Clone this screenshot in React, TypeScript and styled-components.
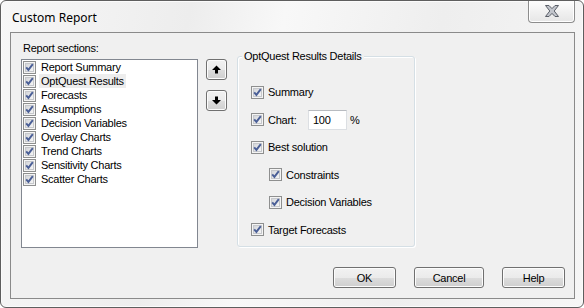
import React from 'react';
import styled, { createGlobalStyle } from 'styled-components';

const GlobalStyle = createGlobalStyle`
  html, body { margin: 0; padding: 0; background: #ffffff; }
  body { width: 584px; height: 308px; overflow: hidden; }
  *, *::before, *::after { box-sizing: border-box; }
`;

const Window = styled.div`
  width: 584px;
  height: 308px;
  display: flex;
  flex-direction: column;
  border: 1px solid #5e5e5e;
  border-radius: 6px;
  background: linear-gradient(100deg, #f7f7f7 0%, #ededed 30%, #f8f8f8 45%, #eeeeee 70%, #f6f6f6 100%);
  box-shadow: inset 0 0 0 1px #fbfbfb;
  padding: 0 8px 8px 9px;
  font-family: "Liberation Sans", Arial, sans-serif;
  font-size: 11px;
  letter-spacing: -0.25px;
  color: #000;
`;

const TitleBar = styled.div`
  height: 31px;
  display: flex;
  align-items: flex-start;
  justify-content: space-between;
`;

const Title = styled.div`
  margin: 9px 0 0 2px;
  font-family: "Noto Sans", "Open Sans", sans-serif;
  font-size: 12px;
  letter-spacing: 0;
  line-height: 16px;
  color: #000;
`;

const CloseButton = styled.div`
  width: 47px;
  height: 22px;
  border: 1px solid #8d8d8d;
  border-top: none;
  border-radius: 0 0 4px 4px;
  background: linear-gradient(#fdfdfd, #f1f1f1 50%, #e6e6e6);
  box-shadow: inset 0 -1px 0 #ffffff, inset 1px 0 0 #ffffff, inset -1px 0 0 #ffffff;
  display: flex;
  align-items: center;
  justify-content: center;
  padding-bottom: 1px;
`;

const Client = styled.div`
  flex: 1;
  display: flex;
  flex-direction: column;
  border: 1px solid #8a8a8a;
  background: #f0f0f0;
  padding: 9px 9px 10px 10px;
`;

const Main = styled.div`
  display: flex;
  align-items: flex-start;
`;

const LeftCol = styled.div`
  width: 177px;
  display: flex;
  flex-direction: column;
`;

const SectionLabel = styled.div`
  height: 13px;
  line-height: 13px;
  margin: 0 0 4px 2px;
`;

const ListBox = styled.div`
  height: 189px;
  border: 1px solid #828790;
  background: #ffffff;
  padding: 0 1px;
  display: flex;
  flex-direction: column;
`;

const ListRow = styled.div`
  height: 14px;
  display: flex;
  align-items: center;
`;

const ItemText = styled.span<{ $selected?: boolean }>`
  margin-left: 3px;
  padding: 0 2px;
  height: 14px;
  line-height: 14px;
  background: ${(p) => (p.$selected ? '#ededed' : 'transparent')};
  white-space: nowrap;
`;

const ArrowCol = styled.div`
  margin: 17px 0 0 8px;
  display: flex;
  flex-direction: column;
  gap: 10px;
`;

const ButtonBase = styled.div`
  border: 1px solid #707070;
  border-radius: 3px;
  background: linear-gradient(#f2f2f2 0%, #ebebeb 50%, #dddddd 51%, #cfcfcf 100%);
  box-shadow: inset 0 0 0 1px #fcfcfc;
  display: flex;
  align-items: center;
  justify-content: center;
`;

const ArrowButton = styled(ButtonBase)`
  width: 21px;
  height: 21px;
`;

const GroupBox = styled.div`
  position: relative;
  margin: 14px 0 0 10px;
  width: 178px;
  height: 191px;
  border: 1px solid #d5dfe5;
  border-radius: 3px;
  box-shadow: inset 1px 1px 0 #ffffff, 1px 1px 0 #ffffff;
  padding: 25px 0 0 13px;
  display: flex;
  flex-direction: column;
  gap: 7.5px;
`;

const Legend = styled.div`
  position: absolute;
  top: -8px;
  left: 4px;
  padding: 0 2px;
  background: #f0f0f0;
  line-height: 14px;
  white-space: nowrap;
`;

const OptionRow = styled.div<{ $indent?: boolean }>`
  height: 20px;
  display: flex;
  align-items: center;
  padding-left: ${(p) => (p.$indent ? '18px' : '0')};
`;

const OptionLabel = styled.label<{ $width?: number }>`
  display: flex;
  align-items: center;
  width: ${(p) => (p.$width ? `${p.$width}px` : 'auto')};
  white-space: nowrap;
`;

const OptionText = styled.span`
  margin-left: 4px;
  line-height: 14px;
`;

const NumberInput = styled.div`
  width: 39px;
  height: 20px;
  background: #ffffff;
  border: 1px solid #dcdfe3;
  border-top-color: #b8bbc0;
  padding-left: 4px;
  line-height: 18px;
`;

const Unit = styled.span`
  margin-left: 3px;
`;

const Footer = styled.div`
  margin-top: auto;
  display: flex;
  justify-content: flex-end;
  gap: 18px;
`;

const DialogButton = styled(ButtonBase)<{ $w: number }>`
  width: ${(p) => p.$w}px;
  height: 21px;
  line-height: 14px;
`;

const CheckSvg = styled.svg`
  flex: none;
  display: block;
`;

const CheckBox: React.FC = () => (
  <CheckSvg width="13" height="13" viewBox="0 0 13 13">
    <defs>
      <linearGradient id="cbfill" x1="0" y1="0" x2="1" y2="1">
        <stop offset="0" stopColor="#d2d4d8" />
        <stop offset="1" stopColor="#f7f7f7" />
      </linearGradient>
    </defs>
    <rect x="0.5" y="0.5" width="12" height="12" fill="#f4f4f4" stroke="#8e8f8f" />
    <rect x="2.5" y="2.5" width="8" height="8" fill="url(#cbfill)" stroke="#c6c8cc" />
    <path d="M3.2 6.3 L5.4 8.9 L9.8 3.2" fill="none" stroke="#4a5f97" strokeWidth="1.9" strokeLinejoin="miter" />
  </CheckSvg>
);

const UpArrow: React.FC<{ down?: boolean }> = ({ down }) => (
  <svg width="9" height="9" viewBox="0 0 9 9" style={down ? { transform: 'rotate(180deg)' } : undefined}>
    <polygon points="4.5,0.5 9,5 6,5 6,8.5 3,8.5 3,5 0,5" fill="#000" />
  </svg>
);

const CloseGlyph: React.FC = () => (
  <svg width="14" height="12" viewBox="0 0 14 12">
    <polygon
      points="0.5,0.5 4,0.5 7,3.6 10,0.5 13.5,0.5 9.2,6 13.5,11.5 10,11.5 7,8.4 4,11.5 0.5,11.5 4.8,6"
      fill="#c2c5cc"
      stroke="#5a5f68"
      strokeWidth="1"
      strokeLinejoin="round"
    />
  </svg>
);

const sections = [
  'Report Summary',
  'OptQuest Results',
  'Forecasts',
  'Assumptions',
  'Decision Variables',
  'Overlay Charts',
  'Trend Charts',
  'Sensitivity Charts',
  'Scatter Charts',
];

export default function App() {
  return (
    <>
      <GlobalStyle />
      <Window>
        <TitleBar>
          <Title>Custom Report</Title>
          <CloseButton>
            <CloseGlyph />
          </CloseButton>
        </TitleBar>
        <Client>
          <Main>
            <LeftCol>
              <SectionLabel>Report sections:</SectionLabel>
              <ListBox>
                {sections.map((s, i) => (
                  <ListRow key={s}>
                    <CheckBox />
                    <ItemText $selected={i === 1}>{s}</ItemText>
                  </ListRow>
                ))}
              </ListBox>
            </LeftCol>
            <ArrowCol>
              <ArrowButton>
                <UpArrow />
              </ArrowButton>
              <ArrowButton>
                <UpArrow down />
              </ArrowButton>
            </ArrowCol>
            <GroupBox>
              <Legend>OptQuest Results Details</Legend>
              <OptionRow>
                <OptionLabel>
                  <CheckBox />
                  <OptionText>Summary</OptionText>
                </OptionLabel>
              </OptionRow>
              <OptionRow>
                <OptionLabel $width={57}>
                  <CheckBox />
                  <OptionText>Chart:</OptionText>
                </OptionLabel>
                <NumberInput>100</NumberInput>
                <Unit>%</Unit>
              </OptionRow>
              <OptionRow>
                <OptionLabel>
                  <CheckBox />
                  <OptionText>Best solution</OptionText>
                </OptionLabel>
              </OptionRow>
              <OptionRow $indent>
                <OptionLabel>
                  <CheckBox />
                  <OptionText>Constraints</OptionText>
                </OptionLabel>
              </OptionRow>
              <OptionRow $indent>
                <OptionLabel>
                  <CheckBox />
                  <OptionText>Decision Variables</OptionText>
                </OptionLabel>
              </OptionRow>
              <OptionRow>
                <OptionLabel>
                  <CheckBox />
                  <OptionText>Target Forecasts</OptionText>
                </OptionLabel>
              </OptionRow>
            </GroupBox>
          </Main>
          <Footer>
            <DialogButton $w={63}>OK</DialogButton>
            <DialogButton $w={70}>Cancel</DialogButton>
            <DialogButton $w={63}>Help</DialogButton>
          </Footer>
        </Client>
      </Window>
    </>
  );
}
